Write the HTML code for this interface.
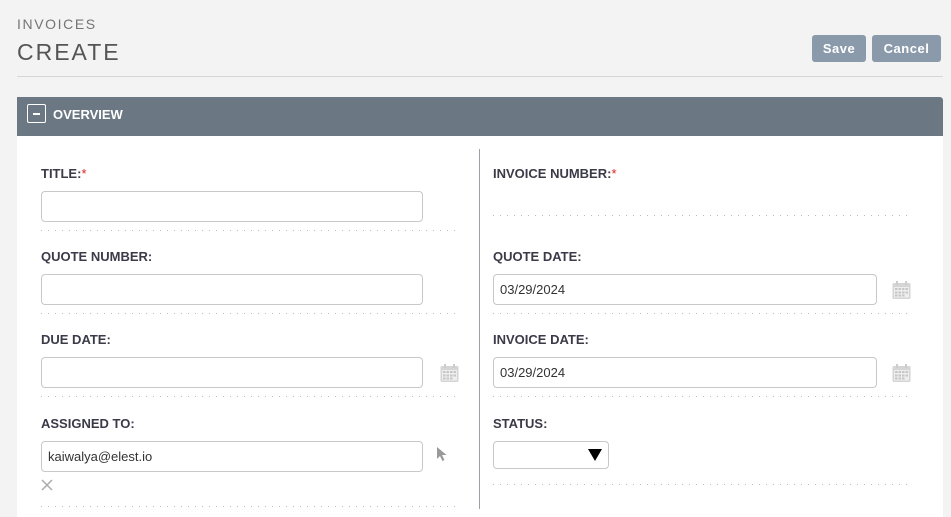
<!DOCTYPE html>
<html><head><meta charset="utf-8"><style>
*{box-sizing:border-box;margin:0;padding:0}
body{width:951px;height:507px;background:#f3f3f3;font-family:"Liberation Sans",sans-serif;position:relative;overflow:hidden;color:#3b3a48}
.a{position:absolute}
.t1{left:17px;top:16px;font-size:14px;letter-spacing:1.6px;color:#747474}
.t2{left:17px;top:39px;font-size:23px;letter-spacing:2px;color:#555}
.btn{top:35px;height:27px;background:#8a9aab;color:#fff;font-weight:bold;font-size:13px;border-radius:3px;text-align:center;line-height:27px;letter-spacing:.5px}
.hl{left:17px;top:76px;width:926px;height:1px;background:#d6d6d6}
.panel{left:17px;top:97px;width:926px;height:420px;background:#fff}
.ph{left:17px;top:97px;width:926px;height:39px;background:#6b7883;border-radius:0 3px 0 0}
.box{left:27px;top:104px;width:19px;height:19px;border:1px solid #fff;border-radius:2px}
.box:after{content:"";position:absolute;left:5px;top:8px;width:7px;height:1.5px;background:#fff}
.ov{left:53px;top:107px;color:#fff;font-weight:bold;font-size:13px}
.lab{font-weight:bold;font-size:13px;color:#3b3a48}
.lab b{color:#e02020;font-weight:normal}
.in{height:31px;border:1px solid #c8c8c8;border-radius:4px;background:#fff;font-size:13px;padding-left:6px;line-height:29px;color:#333}
.dot{height:1px;background-image:linear-gradient(90deg,#bbb 1px,transparent 1px);background-size:7px 1px}
.div{left:479px;top:149px;width:1px;height:360px;background:#9aa0a6}
.cal{width:19px;height:19px}
</style></head><body>
<div class="a t1">INVOICES</div>
<div class="a t2">CREATE</div>
<div class="a btn" style="left:812px;width:54px">Save</div>
<div class="a btn" style="left:872px;width:69px">Cancel</div>
<div class="a hl"></div>
<div class="a panel"></div>
<div class="a ph"></div>
<div class="a box"></div>
<div class="a ov">OVERVIEW</div>
<div class="a div"></div>

<div class="a lab" style="left:41px;top:166px">TITLE:<b>*</b></div>
<div class="a in" style="left:41px;top:191px;width:382px"></div>
<div class="a dot" style="left:41px;top:230px;width:417px"></div>

<div class="a lab" style="left:493px;top:166px">INVOICE NUMBER:<b>*</b></div>
<div class="a dot" style="left:493px;top:215px;width:418px"></div>

<div class="a lab" style="left:41px;top:249px">QUOTE NUMBER:</div>
<div class="a in" style="left:41px;top:274px;width:382px"></div>
<div class="a dot" style="left:41px;top:313px;width:417px"></div>

<div class="a lab" style="left:493px;top:249px">QUOTE DATE:</div>
<div class="a in" style="left:493px;top:274px;width:384px">03/29/2024</div>
<div class="a dot" style="left:493px;top:313px;width:418px"></div>

<div class="a lab" style="left:41px;top:332px">DUE DATE:</div>
<div class="a in" style="left:41px;top:357px;width:382px"></div>
<div class="a dot" style="left:41px;top:396px;width:417px"></div>

<div class="a lab" style="left:493px;top:332px">INVOICE DATE:</div>
<div class="a in" style="left:493px;top:357px;width:384px">03/29/2024</div>
<div class="a dot" style="left:493px;top:396px;width:418px"></div>

<div class="a lab" style="left:41px;top:416px">ASSIGNED TO:</div>
<div class="a in" style="left:41px;top:441px;width:382px">kaiwalya@elest.io</div>
<svg class="a" style="left:41px;top:479px" width="12" height="12"><path d="M1 1L11 11M11 1L1 11" stroke="#aaa" stroke-width="1.5"/></svg>
<div class="a dot" style="left:41px;top:506px;width:417px"></div>

<div class="a lab" style="left:493px;top:416px">STATUS:</div>
<div class="a in" style="left:493px;top:441px;width:116px;height:28px"></div>
<svg class="a" style="left:588px;top:449px" width="14" height="12"><path d="M0 0H14L7 12Z" fill="#000"/></svg>
<div class="a dot" style="left:493px;top:484px;width:418px"></div>

<svg class="a" style="left:436px;top:446px" width="12" height="16"><path d="M1 1L1 13L4 10L6.5 15L8.5 14L6 9L10.5 9Z" fill="#999"/></svg>

<svg class="a cal" style="left:440px;top:364px" viewBox="0 0 19 19"><rect x="0.5" y="2" width="18" height="16" rx="1.5" fill="#d5d5d5"/><rect x="2" y="6" width="15" height="10.5" fill="#eee"/><g fill="#c6c6c6"><rect x="3" y="7" width="2.5" height="2"/><rect x="6.5" y="7" width="2.5" height="2"/><rect x="10" y="7" width="2.5" height="2"/><rect x="13.5" y="7" width="2.5" height="2"/><rect x="3" y="10.5" width="2.5" height="2"/><rect x="6.5" y="10.5" width="2.5" height="2"/><rect x="10" y="10.5" width="2.5" height="2"/><rect x="13.5" y="10.5" width="2.5" height="2"/><rect x="3" y="13.5" width="2.5" height="2"/><rect x="6.5" y="13.5" width="2.5" height="2"/><rect x="10" y="13.5" width="2.5" height="2"/></g><rect x="4" y="0" width="2" height="4" fill="#ccc"/><rect x="13" y="0" width="2" height="4" fill="#ccc"/></svg>
<svg class="a cal" style="left:892px;top:281px" viewBox="0 0 19 19"><rect x="0.5" y="2" width="18" height="16" rx="1.5" fill="#d5d5d5"/><rect x="2" y="6" width="15" height="10.5" fill="#eee"/><g fill="#c6c6c6"><rect x="3" y="7" width="2.5" height="2"/><rect x="6.5" y="7" width="2.5" height="2"/><rect x="10" y="7" width="2.5" height="2"/><rect x="13.5" y="7" width="2.5" height="2"/><rect x="3" y="10.5" width="2.5" height="2"/><rect x="6.5" y="10.5" width="2.5" height="2"/><rect x="10" y="10.5" width="2.5" height="2"/><rect x="13.5" y="10.5" width="2.5" height="2"/><rect x="3" y="13.5" width="2.5" height="2"/><rect x="6.5" y="13.5" width="2.5" height="2"/><rect x="10" y="13.5" width="2.5" height="2"/></g><rect x="4" y="0" width="2" height="4" fill="#ccc"/><rect x="13" y="0" width="2" height="4" fill="#ccc"/></svg>
<svg class="a cal" style="left:892px;top:364px" viewBox="0 0 19 19"><rect x="0.5" y="2" width="18" height="16" rx="1.5" fill="#d5d5d5"/><rect x="2" y="6" width="15" height="10.5" fill="#eee"/><g fill="#c6c6c6"><rect x="3" y="7" width="2.5" height="2"/><rect x="6.5" y="7" width="2.5" height="2"/><rect x="10" y="7" width="2.5" height="2"/><rect x="13.5" y="7" width="2.5" height="2"/><rect x="3" y="10.5" width="2.5" height="2"/><rect x="6.5" y="10.5" width="2.5" height="2"/><rect x="10" y="10.5" width="2.5" height="2"/><rect x="13.5" y="10.5" width="2.5" height="2"/><rect x="3" y="13.5" width="2.5" height="2"/><rect x="6.5" y="13.5" width="2.5" height="2"/><rect x="10" y="13.5" width="2.5" height="2"/></g><rect x="4" y="0" width="2" height="4" fill="#ccc"/><rect x="13" y="0" width="2" height="4" fill="#ccc"/></svg>
</body></html>
